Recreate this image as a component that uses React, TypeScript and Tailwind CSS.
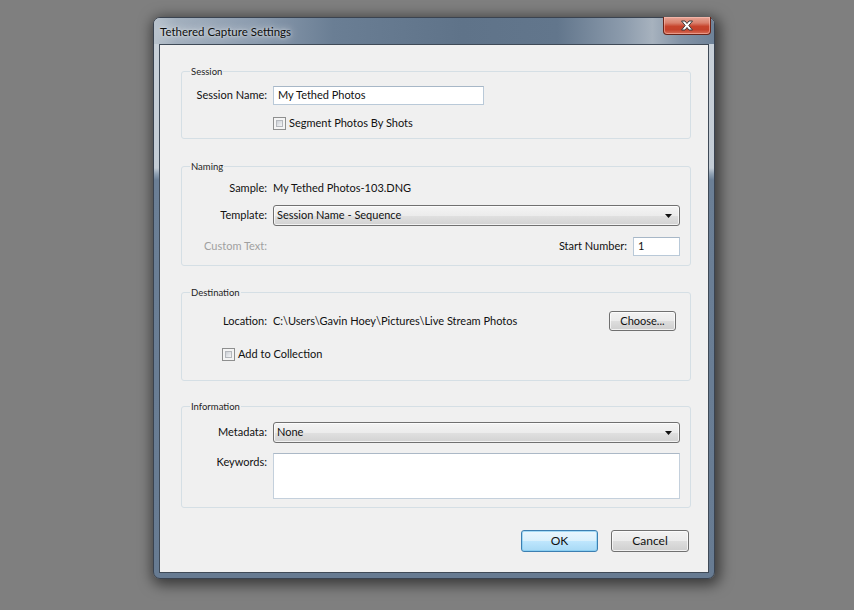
import React from "react";

function Checkbox() {
  return (
    <div className="w-[13px] h-[13px] shrink-0 border border-[#8e8f8f] bg-[#f4f4f4] p-[2px]">
      <div className="w-full h-full border border-[#b5b8bd] bg-[linear-gradient(135deg,#cbcfd5_0%,#e4e6e9_60%,#f6f6f6_100%)]" />
    </div>
  );
}

function Combo({ text }: { text: string }) {
  return (
    <div className="h-[21px] w-[407px] flex items-center justify-between rounded-[3px] border border-[#707070] bg-[linear-gradient(to_bottom,#f4f4f4_0%,#ececec_50%,#e0e0e0_52%,#d2d2d2_100%)] pl-[3px] pr-[7px] shadow-[inset_0_0_0_1px_rgba(255,255,255,0.7)]">
      <span>{text}</span>
      <svg width="7" height="4" viewBox="0 0 7 4">
        <path d="M0 0H7L3.5 4Z" fill="#111" />
      </svg>
    </div>
  );
}

function Group({ title, className, children }: { title: string; className?: string; children: React.ReactNode }) {
  return (
    <fieldset className={"w-[510px] rounded-[3px] border border-[#d5dfe5] " + (className ?? "")}>
      <legend className="ml-[8px] px-[1px] text-[9.5px] leading-[13px] text-[#1e1e1e]">{title}</legend>
      {children}
    </fieldset>
  );
}

export default function App() {
  return (
    <div className="w-[854px] h-[610px] overflow-hidden bg-[#7f7f7f] pl-[153px] pt-[17px] font-['Lato',sans-serif] text-[11px] text-[#111]">
      <div className="w-[562px] h-[562px] flex flex-col rounded-[7px] border border-[#3a4350] px-[5px] pb-[5px] shadow-[2px_3px_14px_3px_rgba(0,0,0,0.55)] bg-[linear-gradient(to_bottom,#c9d1d9_0px,#c3ccd5_150px,#8fa0b2_156px,#6b7f96_162px,#677b92_100%)]">
        {/* Title bar */}
        <div className="-mx-[5px] h-[26px] shrink-0 flex items-start rounded-t-[6px] bg-[linear-gradient(to_right,#b9c3cd_0%,#a3b0be_4%,#8c9caf_18%,#6a7e94_32%,#5f7389_55%,#62768c_72%,#8d9cad_84%,#a7b2be_89%,#8393a6_94%,#6e8298_100%)]">
          <div className="pl-[6px] pt-[6px] text-[11.5px] leading-[15px] text-[#0d0d0d] [text-shadow:0_0_8px_rgba(255,255,255,0.9),0_0_3px_rgba(255,255,255,0.7)]">
            Tethered Capture Settings
          </div>
          <div className="ml-auto mr-[3px] -mt-[1px] w-[48px] h-[18px] flex items-center justify-center rounded-b-[4px] border border-[#6b2418] border-t-0 bg-[linear-gradient(to_bottom,#e7a597_0%,#d9806c_35%,#c7442d_55%,#c4412b_75%,#d7705a_100%)] shadow-[inset_0_0_0_1px_rgba(255,200,190,0.5)]">
            <svg width="14" height="11" viewBox="0 0 14 11">
              <path
                d="M1.5 1H5L7 3.5L9 1H12.5L8.8 5.5L12.5 10H9L7 7.5L5 10H1.5L5.2 5.5Z"
                fill="#ffffff"
                stroke="#3b3b3b"
                strokeWidth="1"
                strokeLinejoin="round"
              />
            </svg>
          </div>
        </div>

        {/* Client area */}
        <div className="flex-1 flex flex-col border border-[#3f4a57] bg-[#f0f0f0] pl-[21px] pt-[20px]">
          {/* Session */}
          <Group title="Session" className="pb-[7px]">
            <div className="mt-[8px] flex items-center">
              <div className="w-[85px] text-right">Session Name:</div>
              <div className="ml-[6px] w-[211px] h-[19px] flex items-center border border-[#b9c9d8] border-t-[#a7b7c7] bg-white pl-[4px]">
                My Tethed Photos
              </div>
            </div>
            <div className="mt-[10px] h-[16px] flex items-center pl-[91px]">
              <Checkbox />
              <span className="ml-[3px]">Segment Photos By Shots</span>
            </div>
          </Group>

          {/* Naming */}
          <Group title="Naming" className="mt-[21px] pb-[9px]">
            <div className="mt-[7px] h-[16px] flex items-center">
              <div className="w-[85px] text-right">Sample:</div>
              <div className="ml-[6px]">My Tethed Photos-103.DNG</div>
            </div>
            <div className="mt-[9px] flex items-center">
              <div className="w-[85px] text-right">Template:</div>
              <div className="ml-[6px]">
                <Combo text="Session Name - Sequence" />
              </div>
            </div>
            <div className="mt-[11px] flex items-center pr-[10px]">
              <div className="w-[85px] text-right text-[#a0a0a0]">Custom Text:</div>
              <div className="flex-1" />
              <div>Start Number:</div>
              <div className="ml-[6px] w-[47px] h-[19px] flex items-center border border-[#b9c9d8] border-t-[#a7b7c7] bg-white pl-[4px]">
                1
              </div>
            </div>
          </Group>

          {/* Destination */}
          <Group title="Destination" className="mt-[20px] pb-[18px]">
            <div className="mt-[12px] flex items-center pr-[14px]">
              <div className="w-[85px] text-right">Location:</div>
              <div className="ml-[6px] flex-1">C:\Users\Gavin Hoey\Pictures\Live Stream Photos</div>
              <div className="w-[67px] h-[20px] flex items-center justify-center rounded-[3px] border border-[#707070] bg-[linear-gradient(to_bottom,#f2f2f2_0%,#ebebeb_50%,#dddddd_52%,#cfcfcf_100%)] shadow-[inset_0_0_0_1px_rgba(255,255,255,0.7)]">
                Choose...
              </div>
            </div>
            <div className="mt-[15px] h-[16px] flex items-center pl-[40px]">
              <Checkbox />
              <span className="ml-[3px]">Add to Collection</span>
            </div>
          </Group>

          {/* Information */}
          <Group title="Information" className="mt-[19px] pb-[8px]">
            <div className="mt-[9px] flex items-center">
              <div className="w-[85px] text-right">Metadata:</div>
              <div className="ml-[6px]">
                <Combo text="None" />
              </div>
            </div>
            <div className="mt-[10px] flex items-start">
              <div className="w-[85px] text-right pt-[1px]">Keywords:</div>
              <div className="ml-[6px] w-[407px] h-[46px] border border-[#c4d0dc] border-t-[#abb8c6] bg-white" />
            </div>
          </Group>

          {/* Buttons */}
          <div className="mt-[22px] flex justify-end gap-[13px] pr-[19px]">
            <div className="w-[77px] h-[22px] flex items-center justify-center rounded-[3px] border border-[#3c7fb1] bg-[linear-gradient(to_bottom,#eaf6fd_0%,#d9f0fc_50%,#bee6fd_52%,#a7d9f5_100%)] shadow-[inset_0_0_0_1px_rgba(120,200,240,0.6)] text-[12px]">
              OK
            </div>
            <div className="w-[78px] h-[22px] flex items-center justify-center rounded-[3px] border border-[#707070] bg-[linear-gradient(to_bottom,#f2f2f2_0%,#ebebeb_50%,#dddddd_52%,#cfcfcf_100%)] shadow-[inset_0_0_0_1px_rgba(255,255,255,0.7)] text-[12px]">
              Cancel
            </div>
          </div>
        </div>
      </div>
    </div>
  );
}
